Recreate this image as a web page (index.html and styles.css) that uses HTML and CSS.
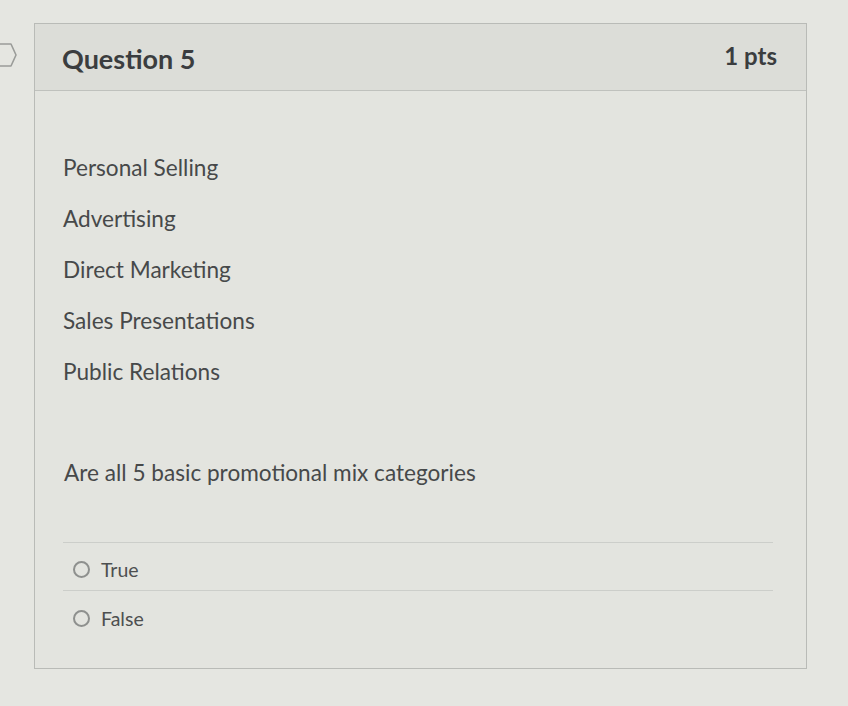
FILE: index.html
```html
<!DOCTYPE html>
<html lang="en">
<head>
<meta charset="utf-8">
<title>Question 5</title>
<link rel="stylesheet" href="styles.css">
</head>
<body>
<div class="page">
  <svg class="flag" width="20" height="30" viewBox="0 0 20 30" aria-hidden="true">
    <path d="M-2 4 H11 L16 15 L11 26 H-2" fill="none" stroke="#9a9c99" stroke-width="1.6" stroke-linejoin="round"/>
  </svg>
  <section class="card">
    <header class="card-head">
      <h2 class="title">Question 5</h2>
      <span class="pts">1 pts</span>
    </header>
    <div class="card-body">
      <ul class="terms">
        <li>Personal Selling</li>
        <li>Advertising</li>
        <li>Direct Marketing</li>
        <li>Sales Presentations</li>
        <li>Public Relations</li>
      </ul>
      <p class="prompt">Are all 5 basic promotional mix categories</p>
      <div class="answers">
        <label class="answer"><span class="radio"></span>True</label>
        <label class="answer"><span class="radio"></span>False</label>
      </div>
    </div>
  </section>
</div>
</body>
</html>
```
FILE: styles.css
```css
html, body {
  margin: 0;
  padding: 0;
}

body {
  background: #e5e6e1;
  font-family: Lato, "Open Sans", sans-serif;
  color: #454748;
}

.page {
  position: relative;
  padding: 23px 0 0 34px;
  height: 683px;
}

.flag {
  position: absolute;
  left: 0;
  top: 40px;
}

.card {
  width: 773px;
  height: 646px;
  border: 1px solid #b9bbb7;
  background: #e3e4df;
  box-sizing: border-box;
  display: flex;
  flex-direction: column;
}

.card-head {
  height: 67px;
  flex: none;
  box-sizing: border-box;
  background: #dcddd8;
  border-bottom: 1px solid #bfc1bd;
  display: flex;
  align-items: center;
  justify-content: space-between;
  padding: 0 29px 0 27px;
}

.title {
  margin: 0;
  font-size: 27px;
  font-weight: 700;
  color: #3b3d3f;
  position: relative;
  top: 1px;
}

.pts {
  font-size: 24px;
  font-weight: 700;
  color: #3b3d3f;
  position: relative;
  top: -2px;
}

.card-body {
  padding: 62px 33px 0 28px;
}

.terms {
  list-style: none;
  margin: 0;
  padding: 0;
  display: flex;
  flex-direction: column;
  gap: 21px;
}

.terms li,
.prompt {
  font-size: 22.6px;
  line-height: 30px;
  color: #47494a;
}

.prompt {
  margin: 71px 0 54px 1px;
}

.answers {
  display: flex;
  flex-direction: column;
}

.answer {
  display: flex;
  align-items: center;
  gap: 11px;
  height: 48px;
  padding: 6px 0 0 10px;
  box-sizing: border-box;
  border-top: 1px solid #ccceca;
  font-size: 19.5px;
  color: #4d4f50;
}

.answer + .answer {
  padding-top: 8px;
}

.radio {
  width: 17px;
  height: 17px;
  border: 2px solid #8e908e;
  border-radius: 50%;
  box-sizing: border-box;
  flex: none;
}
```
